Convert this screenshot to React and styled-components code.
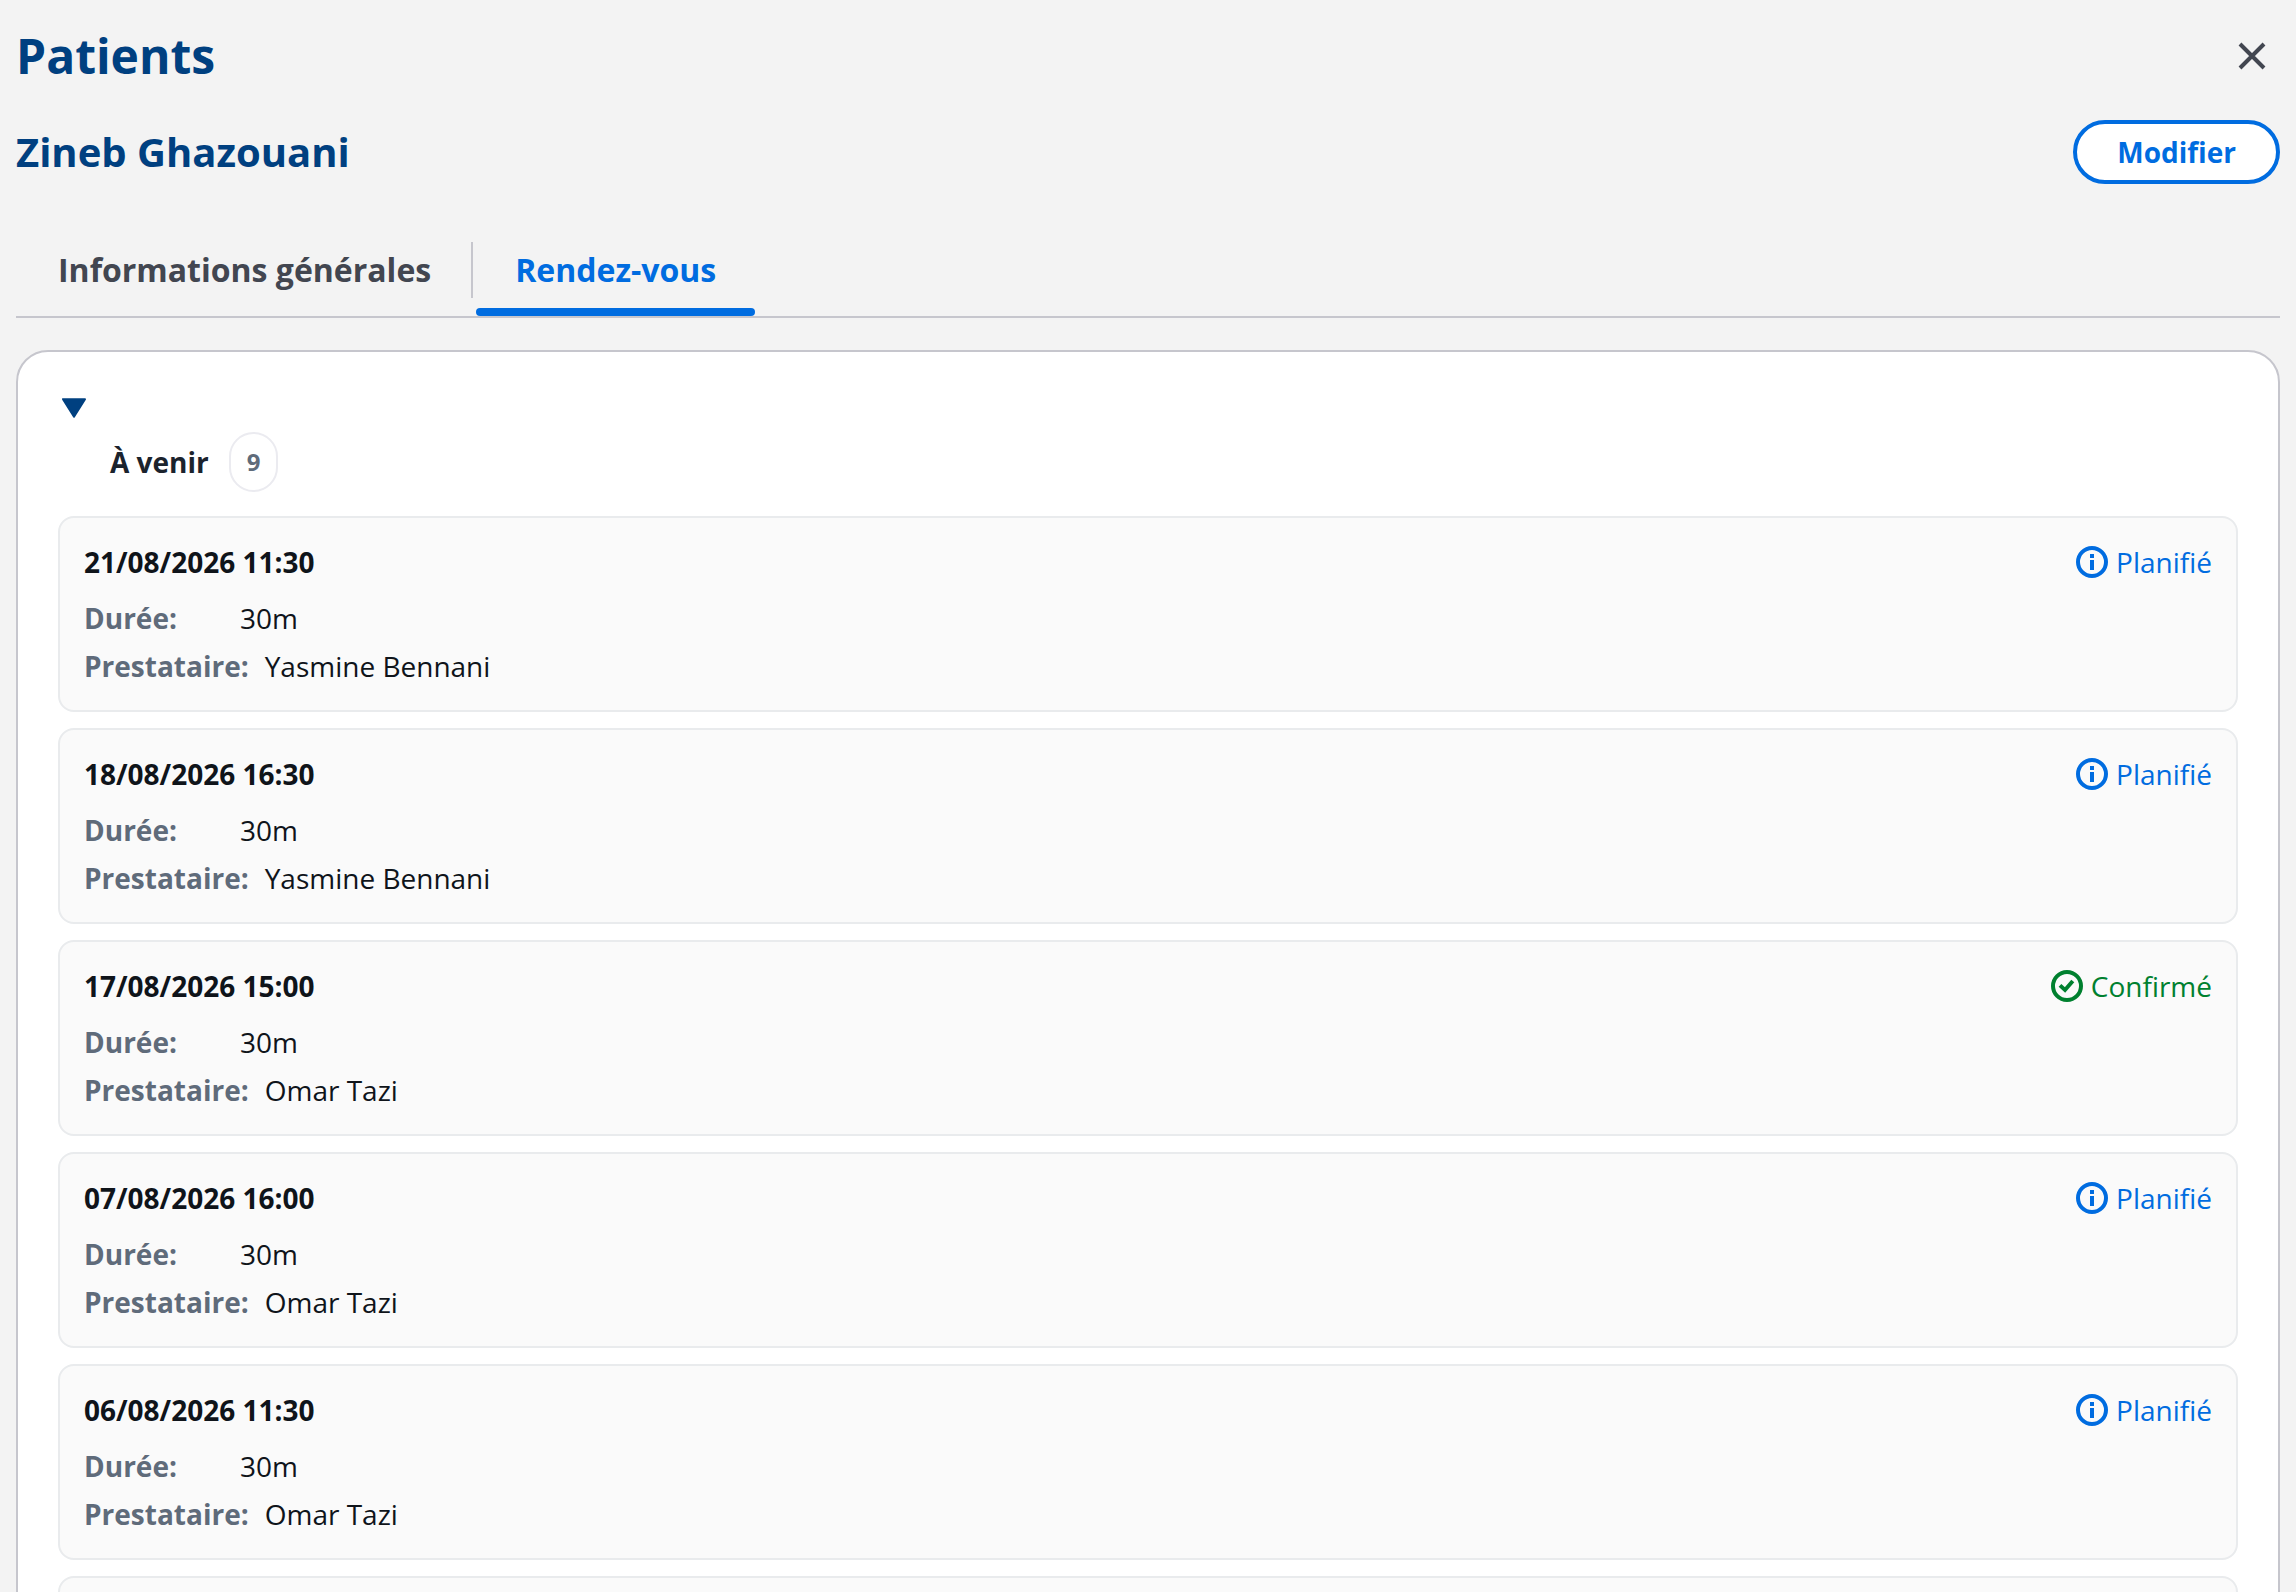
import React, { useState } from 'react';
import styled, { createGlobalStyle } from 'styled-components';

const GlobalStyle = createGlobalStyle`
*{
    box-sizing: border-box;
}
body{
    margin: 0;
    background: #f3f3f3;
    color: #0f141a;
    font-family: "Open Sans", "Noto Sans", sans-serif;
    font-size: 28px;
    line-height: 40px;
}
button{
    font-family: inherit;
    cursor: pointer;
}
h1, h2, h3, dl, dd, ul{
    margin: 0;
    padding: 0;
}
`;

const Page = styled.main`
padding: 24px 16px 0;
height: 100vh;
overflow: hidden;
`;

const TitleBar = styled.header`
display: flex;
align-items: center;
justify-content: space-between;
height: 64px;
margin-bottom: 32px;
padding-right: 12px;
h1{
    font-size: 48px;
    line-height: 60px;
    font-weight: 700;
    color: #004080;
}
`;

const CloseButton = styled.button`
display: flex;
padding: 0;
border: 0;
background: none;
color: #424650;
`;

const PatientBar = styled.div`
display: flex;
align-items: center;
justify-content: space-between;
margin-bottom: 48px;
h2{
    font-size: 40px;
    line-height: 48px;
    font-weight: 700;
    color: #004080;
}
`;

const EditButton = styled.button`
padding: 8px 40px;
border: 4px solid #006ce0;
border-radius: 40px;
background: #fff;
color: #006ce0;
font-size: 28px;
line-height: 40px;
font-weight: 700;
`;

const TabList = styled.div`
display: flex;
border-bottom: 2px solid #c6c6cd;
margin-bottom: 32px;
`;

const Tab = styled.button`
display: flex;
flex-direction: column;
padding: 10px 0 0;
border: 0;
background: none;
color: ${({ $active }) => ($active ? '#006ce0' : '#424650')};
font-size: 32px;
line-height: 56px;
font-weight: 700;
span{
    padding: 0 40px;
    border-left: 2px solid transparent;
    border-right: 2px solid ${({ $divided }) => ($divided ? '#c6c6cd' : 'transparent')};
}
&::after{
    content: "";
    align-self: stretch;
    height: 8px;
    margin: 10px 3px 0;
    border-radius: 4px;
    background: ${({ $active }) => ($active ? '#006ce0' : 'transparent')};
}
`;

const Panel = styled.section`
padding: 40px;
border: 2px solid #c6c6cd;
border-radius: 32px;
background: #fff;
`;

const SectionToggle = styled.button`
display: block;
padding: 0;
border: 0;
background: none;
color: #004080;
svg{
    display: block;
}
`;

const SectionHead = styled.div`
display: flex;
align-items: center;
gap: 20px;
margin: 8px 0 24px;
padding-left: 52px;
h3{
    font-size: 28px;
    line-height: 40px;
    font-weight: 700;
    color: #1b232d;
}
`;

const Counter = styled.span`
padding: 8px 16px;
border: 2px solid #ebebf0;
border-radius: 32px;
color: #5f6b7a;
font-size: 24px;
line-height: 40px;
font-weight: 700;
`;

const CardList = styled.ul`
display: flex;
flex-direction: column;
gap: 16px;
list-style: none;
`;

const Card = styled.li`
display: flex;
align-items: flex-start;
justify-content: space-between;
padding: 24px;
border: 2px solid #e9ebed;
border-radius: 16px;
background: #fafafa;
`;

const CardDate = styled.div`
margin-bottom: 16px;
font-weight: 700;
`;

const Details = styled.dl`
display: flex;
flex-direction: column;
gap: 8px;
`;

const DetailRow = styled.div`
display: flex;
gap: 16px;
dt{
    min-width: 140px;
    color: #5f6b7a;
    font-weight: 700;
}
`;

const StatusLabel = styled.div`
display: flex;
align-items: center;
gap: 8px;
color: ${({ $color }) => $color};
`;

const CloseIcon = () => (
    <svg width="32" height="32" viewBox="0 0 16 16" fill="none" stroke="currentColor" strokeWidth="2" aria-hidden="true">
        <path d="m2 2 12 12M14 2 2 14" />
    </svg>
)

const CaretIcon = () => (
    <svg width="32" height="32" viewBox="0 0 16 16" fill="currentColor" stroke="currentColor" strokeWidth="1" strokeLinejoin="round" aria-hidden="true">
        <path d="M2.5 3.6h11L8 12.3Z" />
    </svg>
)

const InfoIcon = () => (
    <svg width="32" height="32" viewBox="0 0 16 16" fill="none" stroke="currentColor" strokeWidth="2" aria-hidden="true">
        <circle cx="8" cy="8" r="7" />
        <path d="M8 4v2M8 7v5" />
    </svg>
)

const CheckIcon = () => (
    <svg width="32" height="32" viewBox="0 0 16 16" fill="none" stroke="currentColor" strokeWidth="2" aria-hidden="true">
        <circle cx="8" cy="8" r="7" />
        <path d="M4.5 7.7 7 10l3.9-4.5" />
    </svg>
)

const statuses = {
    planned: { label: 'Planifié', color: '#006ce0', Icon: InfoIcon },
    confirmed: { label: 'Confirmé', color: '#00802f', Icon: CheckIcon },
};

const appointments = [
    { date: '21/08/2026 11:30', duration: '30m', provider: 'Yasmine Bennani', status: 'planned' },
    { date: '18/08/2026 16:30', duration: '30m', provider: 'Yasmine Bennani', status: 'planned' },
    { date: '17/08/2026 15:00', duration: '30m', provider: 'Omar Tazi', status: 'confirmed' },
    { date: '07/08/2026 16:00', duration: '30m', provider: 'Omar Tazi', status: 'planned' },
    { date: '06/08/2026 11:30', duration: '30m', provider: 'Omar Tazi', status: 'planned' },
];

const tabs = ['Informations générales', 'Rendez-vous'];

const Appointment = ({ date, duration, provider, status }) => {
    const { label, color, Icon } = statuses[status];

    return (
        <Card>
            <div>
                <CardDate>{date}</CardDate>
                <Details>
                    <DetailRow><dt>Durée:</dt><dd>{duration}</dd></DetailRow>
                    <DetailRow><dt>Prestataire:</dt><dd>{provider}</dd></DetailRow>
                </Details>
            </div>
            <StatusLabel $color={color}><Icon />{label}</StatusLabel>
        </Card>
    )
}

const App = () => {
    const [tab, setTab] = useState(1);
    const [open, setOpen] = useState(true);

    return (
        <Page>
            <GlobalStyle />
            <TitleBar>
                <h1>Patients</h1>
                <CloseButton type="button" aria-label="Fermer"><CloseIcon /></CloseButton>
            </TitleBar>
            <PatientBar>
                <h2>Zineb Ghazouani</h2>
                <EditButton type="button">Modifier</EditButton>
            </PatientBar>
            <TabList role="tablist">
                {tabs.map((name, i) => (
                    <Tab
                        key={name}
                        type="button"
                        role="tab"
                        aria-selected={tab === i}
                        $active={tab === i}
                        $divided={i < tabs.length - 1}
                        onClick={() => setTab(i)}
                    >
                        <span>{name}</span>
                    </Tab>
                ))}
            </TabList>
            <Panel>
                <SectionToggle type="button" aria-label="À venir" aria-expanded={open} onClick={() => setOpen(!open)}>
                    <CaretIcon />
                </SectionToggle>
                <SectionHead>
                    <h3>À venir</h3>
                    <Counter>9</Counter>
                </SectionHead>
                {open && (
                    <CardList>
                        {appointments.map((item) => <Appointment key={item.date} {...item} />)}
                        <Card aria-hidden="true" />
                    </CardList>
                )}
            </Panel>
        </Page>
    )
}

export default App
